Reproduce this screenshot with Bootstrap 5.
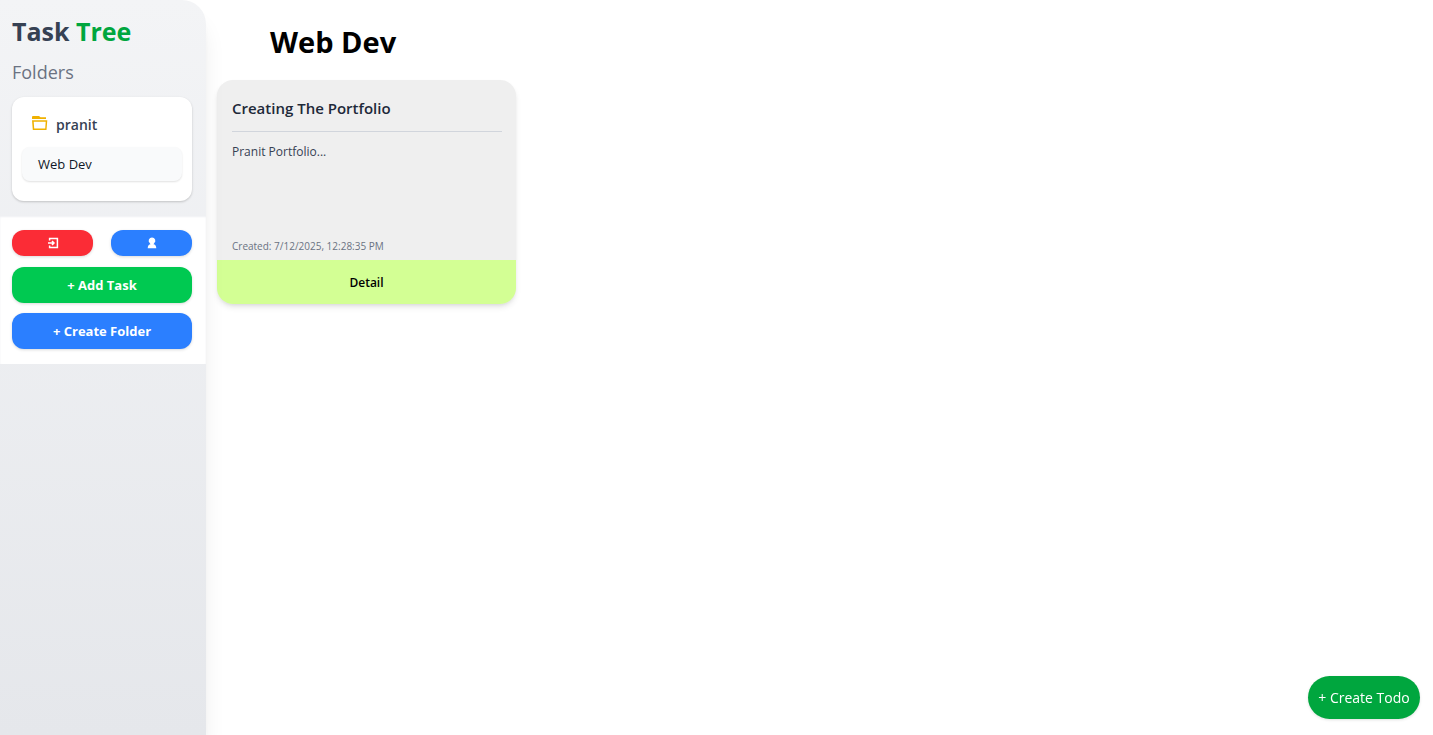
<!DOCTYPE html>
<html lang="en">
<head>
<meta charset="utf-8">
<meta name="viewport" content="width=device-width, initial-scale=1">
<title>Task Tree</title>
<link href="https://cdn.jsdelivr.net/npm/bootstrap@5.3.0/dist/css/bootstrap.min.css" rel="stylesheet">
<style>
  body { font-family: "Open Sans", "Noto Sans", sans-serif; color: #000; }
  button, a { font-family: inherit; }
  .sidebar { width: 206px; border-top-right-radius: 24px; background: linear-gradient(#f3f4f6, #e5e7eb); box-shadow: 0 20px 25px -5px rgba(0,0,0,.1), 0 8px 10px -6px rgba(0,0,0,.1); z-index: 1; }
  .side-top { padding: 11px 14px 15px 12px; }
  .brand { font-size: 25px; line-height: 40px; font-weight: 700; color: #364153; }
  .brand span { color: #00a63e; }
  .folders-title { font-size: 18px; line-height: 28px; font-weight: 500; color: #6a7282; margin: 7px 0 11px; }
  .folder-box { border-radius: 12px; padding: 10px 10px 20px; box-shadow: 0 1px 3px rgba(0,0,0,.1), 0 1px 2px rgba(0,0,0,.1); }
  .folder-name { height: 34px; padding: 0 10px; gap: 8px; font-size: 14px; font-weight: 600; color: #364153; }
  .task-link { height: 34px; margin-top: 6px; padding: 2px 16px 0; border-radius: 8px; background: #f9fafb; color: #101828; font-size: 13px; font-weight: 500; box-shadow: 0 1px 2px rgba(0,0,0,.12); }
  .side-actions { padding: 14px 14px 15px 12px; box-shadow: inset 0 1px 2px #eff0f3; }
  .side-actions .btn { --bs-btn-padding-y: 0; --bs-btn-border-width: 0; --bs-btn-border-radius: 12px; --bs-btn-line-height: 1; color: #fff; box-shadow: 0 1px 3px rgba(0,0,0,.15); }
  .icon-row { gap: 18px; margin-bottom: 11px; }
  .icon-row .btn { height: 26px; }
  .wide-btns { gap: 10px; }
  .side-actions .wide-btn { height: 36px; font-size: 13px; font-weight: 700; }
  .bg-red { background: #fb2c36; }
  .bg-sky { background: #2b7fff; }
  .bg-leaf { background: #00c951; }
  .main-area { padding: 20px 11px; }
  .page-title { font-size: 29px; line-height: 44px; font-weight: 700; padding-left: 53px; margin: 0 0 16px; }
  .task-card { width: 299px; height: 224px; border-radius: 16px; background: #efefef; box-shadow: 0 4px 6px -1px rgba(0,0,0,.1), 0 2px 4px -2px rgba(0,0,0,.1); }
  .task-body { padding: 14px 14px 5px 15px; }
  .task-title { font-size: 15px; line-height: 28px; font-weight: 600; color: #1e2939; padding-bottom: 9px; border-bottom: 1px solid #d1d5dc; margin: 0 0 10px; }
  .task-text { font-size: 12px; line-height: 20px; color: #364153; }
  .task-date { font-size: 10px; line-height: 18px; color: #6a7282; }
  .detail-btn { height: 44px; background: #d3ff94; color: #000; font-size: 12px; font-weight: 600; border: 0; padding: 2px 0 0; }
  .create-todo { right: 13px; bottom: 16px; height: 43px; width: 112px; background: #00a63e; color: #fff; font-size: 14px; font-weight: 500; box-shadow: 0 1px 3px rgba(0,0,0,.12); border: 0; padding: 0; }
</style>
</head>
<body>
<div class="d-flex min-vh-100">
  <aside class="sidebar flex-shrink-0 position-relative">
    <div class="side-top">
      <h1 class="brand m-0">Task <span>Tree</span></h1>
      <h2 class="folders-title">Folders</h2>
      <div class="folder-box bg-white">
        <div class="folder-name d-flex align-items-center">
          <svg width="16" height="16" viewBox="0 0 16 16" aria-hidden="true"><path fill="#f0b100" fill-rule="evenodd" d="M1 0h6l1.500 1.200H14V3H0V1a1 1 0 0 1 1-1ZM0 4.300h15.300l-.8 9.700H.8ZM1.700 5.800l.5 6.700h11l.5-6.700Z"/></svg>
          <span>pranit</span>
        </div>
        <a href="#" class="task-link d-flex align-items-center text-decoration-none">Web Dev</a>
      </div>
    </div>
    <div class="side-actions bg-white">
      <div class="icon-row d-flex">
        <button type="button" class="btn bg-red flex-fill d-flex align-items-center justify-content-center" aria-label="Log out">
          <svg width="12" height="12" viewBox="0 0 12 12" fill="none" stroke="#fff" stroke-width="1.500" aria-hidden="true"><path d="M2.600 3.500V1.400h7.800v9.200H2.600v-2M1 6h6M5 4l2 2-2 2"/></svg>
        </button>
        <button type="button" class="btn bg-sky flex-fill d-flex align-items-center justify-content-center" aria-label="Profile">
          <svg width="12" height="12" viewBox="0 0 12 12" fill="#fff" aria-hidden="true"><path d="M6 .4a3.300 3.300 0 0 1 2.300 5.700L7.500 7.200C9 7.500 10.200 8.500 10.300 11.200H1.700C1.800 8.500 3 7.500 4.500 7.200L3.700 6.100A3.300 3.300 0 0 1 6 .4Z"/></svg>
        </button>
      </div>
      <div class="wide-btns d-grid">
        <button type="button" class="btn wide-btn bg-leaf">+ Add Task</button>
        <button type="button" class="btn wide-btn bg-sky">+ Create Folder</button>
      </div>
    </div>
  </aside>
  <main class="main-area flex-grow-1">
    <h2 class="page-title">Web Dev</h2>
    <article class="task-card d-flex flex-column overflow-hidden">
      <div class="task-body d-flex flex-column flex-grow-1">
        <h3 class="task-title">Creating The Portfolio</h3>
        <p class="task-text m-0">Pranit Portfolio...</p>
        <p class="task-date mt-auto mb-0">Created: 7/12/2025, 12:28:35 PM</p>
      </div>
      <button type="button" class="detail-btn w-100">Detail</button>
    </article>
  </main>
</div>
<button type="button" class="create-todo position-fixed rounded-pill">+ Create Todo</button>
<script src="https://cdn.jsdelivr.net/npm/bootstrap@5.3.0/dist/js/bootstrap.bundle.min.js"></script>
</body>
</html>
